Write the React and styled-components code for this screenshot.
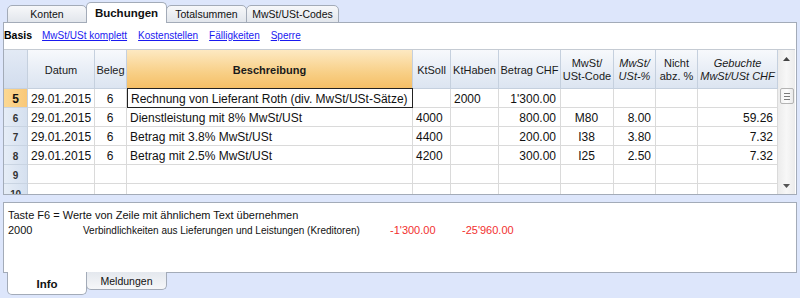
import React from 'react';
import styled, { createGlobalStyle, css } from 'styled-components';

const Global = createGlobalStyle`
  html, body { margin: 0; padding: 0; background: #dde6fb; }
  body { font-family: "Liberation Sans", Arial, sans-serif; color: #000; }
`;

const Frame = styled.div`
  width: 800px;
  height: 298px;
  background: #dde6fb;
  overflow: hidden;
  display: flex;
  flex-direction: column;
`;

const TabStrip = styled.div`
  display: flex;
  align-items: ${p => (p.$bottom ? 'flex-start' : 'flex-end')};
  height: 23px;
  padding-left: 7px;
  box-sizing: border-box;
  position: relative;
  z-index: 2;
  ${p => (p.$bottom ? 'margin-top: -1px;' : 'margin-bottom: -1px;')}
`;

const Tab = styled.div`
  box-sizing: border-box;
  width: ${p => p.$w}px;
  height: ${p => (p.$active ? 21 : 18)}px;
  margin-right: -1px;
  border: 1px solid #a3abb8;
  display: flex;
  align-items: center;
  justify-content: center;
  color: #111;
  ${p => (p.$bottom
    ? css`
        border-top: none;
        border-radius: 0 0 5px 5px;
        background: ${p.$active ? '#fff' : 'linear-gradient(#e4e8ee, #f6f7f9)'};
        height: ${p.$active ? 23 : 18}px;
        padding-top: ${p.$active ? 2 : 0}px;
      `
    : css`
        border-bottom: ${p.$active ? 'none' : '1px solid #a3abb8'};
        border-radius: 5px 5px 0 0;
        background: ${p.$active ? '#fff' : 'linear-gradient(#f7f8fa, #e2e6ec)'};
      `)}
  font-weight: ${p => (p.$active ? 'bold' : 'normal')};
  font-size: ${p => (p.$active ? 11.5 : 10.5)}px;
  position: relative;
  z-index: ${p => (p.$active ? 2 : 1)};
`;

const Panel = styled.div`
  margin: 0 3px;
  box-sizing: border-box;
  border: 1px solid #a3abb8;
  background: #fff;
  height: ${p => p.$h}px;
  display: flex;
  flex-direction: column;
  position: relative;
  z-index: 1;
`;

const LinkBar = styled.div`
  height: 26px;
  display: flex;
  align-items: center;
  gap: 11px;
  font-size: 10px;
  padding-bottom: 2px;
  box-sizing: border-box;
`;

const BarTitle = styled.span`
  font-weight: bold;
  font-size: 10.5px;
  margin-right: -1px;
`;

const BarLink = styled.a`
  color: #1a1af0;
  text-decoration: underline;
  cursor: pointer;
`;

const GridWrap = styled.div`
  display: flex;
  height: 145px;
  overflow: hidden;
`;

const COLS = '24px 67px 32px 286px 38px 48px 62px 53px 42px 42px 80px';

const Grid = styled.div`
  width: 774px;
  display: grid;
  grid-template-columns: ${COLS};
  grid-auto-rows: 19px;
  grid-template-rows: 39px;
  align-content: start;
  border-top: 1px solid #c5cbd3;
  height: 145px;
  overflow: hidden;
  box-sizing: border-box;
`;

const HeadCell = styled.div`
  box-sizing: border-box;
  border-right: 1px solid #c5d0de;
  border-bottom: 1px solid #c5d0de;
  background: ${p => (p.$hot
    ? 'linear-gradient(#fde9c2, #f8cf86 60%, #f5bf66)'
    : p.$corner
      ? 'linear-gradient(#e3eaf5, #d2ddee)'
      : 'linear-gradient(#f7f9fc, #e6ecf5 60%, #dce5f1)')};
  display: flex;
  align-items: center;
  justify-content: center;
  text-align: center;
  font-size: 11px;
  line-height: 13px;
  color: #1a1a1a;
  font-weight: ${p => (p.$hot ? 'bold' : 'normal')};
  font-style: ${p => (p.$italic ? 'italic' : 'normal')};
  padding-top: 2px;
`;

const RowNum = styled.div`
  box-sizing: border-box;
  border-right: 1px solid #c5d0de;
  border-bottom: 1px solid #c9d4e2;
  background: ${p => (p.$sel ? 'linear-gradient(90deg, #fbd894, #f9c878)' : 'linear-gradient(90deg, #e6edf7, #d5e0ef)')};
  display: flex;
  align-items: center;
  justify-content: center;
  font-size: ${p => (p.$sel ? 12 : 10)}px;
  font-weight: bold;
  color: ${p => (p.$sel ? '#111' : '#333')};
  padding-top: 2px;
  letter-spacing: ${p => (p.$sel ? 0 : -0.3)}px;
`;

const Cell = styled.div`
  box-sizing: border-box;
  border-right: 1px solid #dadada;
  border-bottom: 1px solid #dadada;
  font-size: 12px;
  display: flex;
  align-items: center;
  padding: 1px 4px 0 3px;
  white-space: nowrap;
  overflow: hidden;
  justify-content: ${p => (p.$align === 'right' ? 'flex-end' : p.$align === 'center' ? 'center' : 'flex-start')};
  color: #111;
  ${p => p.$focus && css`
    border: 1px solid #222;
    margin-top: -1px;
    height: 20px;
  `}
`;

const Scroll = styled.div`
  width: 17px;
  height: 145px;
  box-sizing: border-box;
  border-top: 1px solid #c5cbd3;
  background: linear-gradient(90deg, #ececec, #f7f7f7 50%, #ececec);
  display: flex;
  flex-direction: column;
  align-items: center;
`;

const ArrowBtn = styled.div`
  width: 17px;
  height: 17px;
  display: flex;
  align-items: center;
  justify-content: center;
`;

const Thumb = styled.div`
  width: 14px;
  height: 16px;
  margin-top: 21px;
  box-sizing: border-box;
  border: 1px solid #b4b4b4;
  border-radius: 2px;
  background: linear-gradient(90deg, #f3f3f3, #fdfdfd 50%, #e9e9e9);
  display: flex;
  flex-direction: column;
  align-items: center;
  justify-content: center;
  gap: 2px;
`;

const Grip = styled.span`
  width: 6px;
  height: 1px;
  background: #7a7a7a;
`;

const Track = styled.div`
  flex: 1;
`;

const InfoPanel = styled(Panel)`
  margin-top: 7px;
  padding: 5px 0 0 4px;
  font-size: 11px;
  line-height: 15px;
  color: #111;
`;

const InfoLine = styled.div`
  display: flex;
  align-items: baseline;
`;

const InfoCol = styled.span`
  width: ${p => (p.$w ? `${p.$w}px` : 'auto')};
  color: ${p => (p.$red ? '#f2302f' : 'inherit')};
  font-size: ${p => (p.$small ? '10px' : 'inherit')};
  flex: none;
  white-space: nowrap;
`;

const Up = () => (
  <svg width="7" height="4" viewBox="0 0 7 4"><path d="M0 4 L3.5 0 L7 4 Z" fill="#444" /></svg>
);
const Down = () => (
  <svg width="7" height="4" viewBox="0 0 7 4"><path d="M0 0 L3.5 4 L7 0 Z" fill="#555" /></svg>
);

const rows = [
  { n: '5', sel: true, d: '29.01.2015', b: '6', t: 'Rechnung von Lieferant Roth (div. MwSt/USt-Sätze)', s: '', h: '2000', a: "1'300.00", c: '', p: '', na: '', g: '' },
  { n: '6', d: '29.01.2015', b: '6', t: 'Dienstleistung mit 8% MwSt/USt', s: '4000', h: '', a: '800.00', c: 'M80', p: '8.00', na: '', g: '59.26' },
  { n: '7', d: '29.01.2015', b: '6', t: 'Betrag mit 3.8% MwSt/USt', s: '4400', h: '', a: '200.00', c: 'I38', p: '3.80', na: '', g: '7.32' },
  { n: '8', d: '29.01.2015', b: '6', t: 'Betrag mit 2.5% MwSt/USt', s: '4200', h: '', a: '300.00', c: 'I25', p: '2.50', na: '', g: '7.32' },
  { n: '9', d: '', b: '', t: '', s: '', h: '', a: '', c: '', p: '', na: '', g: '' },
  { n: '10', d: '', b: '', t: '', s: '', h: '', a: '', c: '', p: '', na: '', g: '' },
];

export default function App() {
  return (
    <Frame>
      <Global />
      <TabStrip>
        <Tab $w={80}>Konten</Tab>
        <Tab $w={81} $active>Buchungen</Tab>
        <Tab $w={81}>Totalsummen</Tab>
        <Tab $w={93}>MwSt/USt-Codes</Tab>
      </TabStrip>
      <Panel $h={173}>
        <LinkBar>
          <BarTitle>Basis</BarTitle>
          <BarLink>MwSt/USt komplett</BarLink>
          <BarLink>Kostenstellen</BarLink>
          <BarLink>Fälligkeiten</BarLink>
          <BarLink>Sperre</BarLink>
        </LinkBar>
        <GridWrap>
          <Grid>
            <HeadCell $corner />
            <HeadCell>Datum</HeadCell>
            <HeadCell>Beleg</HeadCell>
            <HeadCell $hot>Beschreibung</HeadCell>
            <HeadCell>KtSoll</HeadCell>
            <HeadCell>KtHaben</HeadCell>
            <HeadCell>Betrag CHF</HeadCell>
            <HeadCell>MwSt/<br />USt-Code</HeadCell>
            <HeadCell $italic>MwSt/<br />USt-%</HeadCell>
            <HeadCell>Nicht<br />abz. %</HeadCell>
            <HeadCell $italic>Gebuchte<br />MwSt/USt CHF</HeadCell>
            {rows.map(r => (
              <React.Fragment key={r.n}>
                <RowNum $sel={r.sel}>{r.n}</RowNum>
                <Cell>{r.d}</Cell>
                <Cell $align="center">{r.b}</Cell>
                <Cell $focus={r.sel}>{r.t}</Cell>
                <Cell>{r.s}</Cell>
                <Cell>{r.h}</Cell>
                <Cell $align="right">{r.a}</Cell>
                <Cell $align="center">{r.c}</Cell>
                <Cell $align="right">{r.p}</Cell>
                <Cell $align="right">{r.na}</Cell>
                <Cell $align="right">{r.g}</Cell>
              </React.Fragment>
            ))}
          </Grid>
          <Scroll>
            <ArrowBtn><Up /></ArrowBtn>
            <Thumb><Grip /><Grip /><Grip /></Thumb>
            <Track />
            <ArrowBtn><Down /></ArrowBtn>
          </Scroll>
        </GridWrap>
      </Panel>
      <InfoPanel $h={71}>
        <InfoLine>Taste F6 = Werte von Zeile mit ähnlichem Text übernehmen</InfoLine>
        <InfoLine>
          <InfoCol $w={75}>2000</InfoCol>
          <InfoCol $w={307} $small>Verbindlichkeiten aus Lieferungen und Leistungen (Kreditoren)</InfoCol>
          <InfoCol $w={72} $red>-1'300.00</InfoCol>
          <InfoCol $red>-25'960.00</InfoCol>
        </InfoLine>
      </InfoPanel>
      <TabStrip $bottom>
        <Tab $w={80} $active $bottom>Info</Tab>
        <Tab $w={81} $bottom>Meldungen</Tab>
      </TabStrip>
    </Frame>
  );
}
